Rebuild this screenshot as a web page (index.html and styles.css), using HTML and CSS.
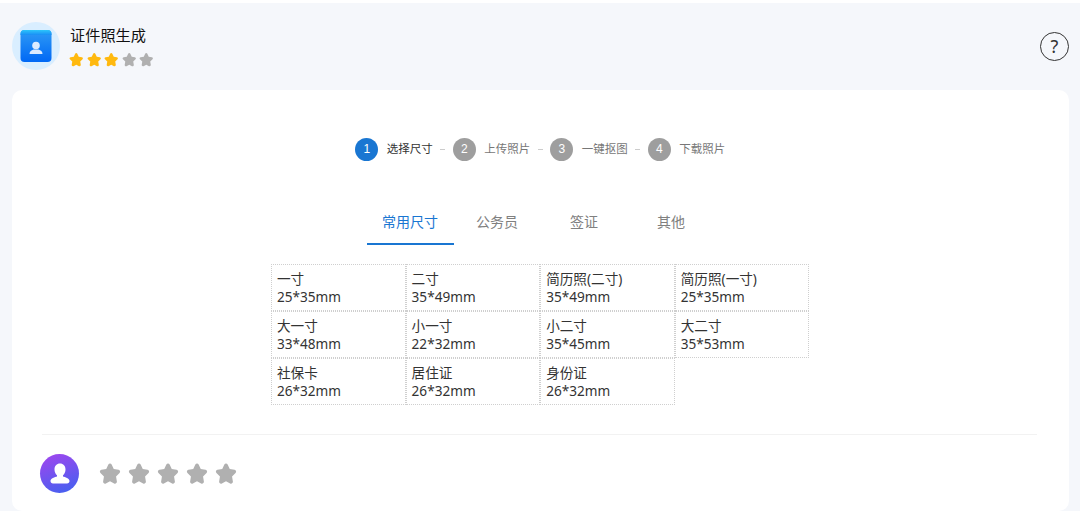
FILE: index.html
```html
<!DOCTYPE html>
<html lang="zh-CN">
<head>
<meta charset="utf-8">
<title>证件照生成</title>
<link rel="stylesheet" href="styles.css">
</head>
<body>
<div class="page">
  <header class="head">
    <div class="logo">
      <svg width="32" height="32" viewBox="0 0 32 32">
        <defs>
          <linearGradient id="lg" x1="0" y1="0" x2="0" y2="1"><stop offset="0" stop-color="#2f9bf5"/><stop offset="1" stop-color="#0068f5"/></linearGradient>
          <linearGradient id="lt" x1="0" y1="0" x2="0" y2="1"><stop offset="0" stop-color="#2cc6fb"/><stop offset="1" stop-color="#1a8ef5"/></linearGradient>
        </defs>
        <rect x="0.500" y="0" width="31" height="32" rx="4" fill="url(#lg)"/>
        <path d="M.5 5V4a4 4 0 0 1 4-4h23a4 4 0 0 1 4 4v1z" fill="url(#lt)"/>
        <circle cx="16" cy="15.500" r="3.800" fill="#dcebff"/>
        <path d="M9.500 24c0-2.600 1.800-3.700 4-4.500h5c2.200.8 4 1.900 4 4.500z" fill="#dcebff"/>
      </svg>
    </div>
    <div class="meta">
      <div class="title">证件照生成</div>
      <div class="stars small">
        <svg class="star on" viewBox="0 0 24 24"><use href="#s"/></svg>
        <svg class="star on" viewBox="0 0 24 24"><use href="#s"/></svg>
        <svg class="star on" viewBox="0 0 24 24"><use href="#s"/></svg>
        <svg class="star" viewBox="0 0 24 24"><use href="#s"/></svg>
        <svg class="star" viewBox="0 0 24 24"><use href="#s"/></svg>
      </div>
    </div>
    <div class="help">?</div>
  </header>

  <main class="card">
    <div class="steps">
      <div class="step active"><span class="num">1</span><span class="lbl">选择尺寸</span></div><i class="dash"></i>
      <div class="step"><span class="num">2</span><span class="lbl">上传照片</span></div><i class="dash"></i>
      <div class="step"><span class="num">3</span><span class="lbl">一键抠图</span></div><i class="dash"></i>
      <div class="step"><span class="num">4</span><span class="lbl">下载照片</span></div>
    </div>

    <nav class="tabs">
      <div class="tab active">常用尺寸</div>
      <div class="tab">公务员</div>
      <div class="tab">签证</div>
      <div class="tab">其他</div>
    </nav>

    <div class="grid">
      <div class="cell">一寸<br>25*35mm</div>
      <div class="cell">二寸<br>35*49mm</div>
      <div class="cell">简历照(二寸)<br>35*49mm</div>
      <div class="cell">简历照(一寸)<br>25*35mm</div>
      <div class="cell">大一寸<br>33*48mm</div>
      <div class="cell">小一寸<br>22*32mm</div>
      <div class="cell">小二寸<br>35*45mm</div>
      <div class="cell">大二寸<br>35*53mm</div>
      <div class="cell">社保卡<br>26*32mm</div>
      <div class="cell">居住证<br>26*32mm</div>
      <div class="cell">身份证<br>26*32mm</div>
    </div>

    <div class="rate">
      <div class="avatar">
        <svg width="24" height="24" viewBox="0 0 24 24"><path d="M12 1.500c3.300 0 5.500 2.500 5.500 6 0 2.500-1 4.500-2.500 5.700v1.300c2 .8 6.500 1.500 6.500 4.500 0 1.600-1 2.500-2.500 2.500H5c-1.500 0-2.500-.9-2.500-2.500 0-3 4.500-3.700 6.500-4.500v-1.300C7.500 12 6.500 10 6.500 7.500c0-3.500 2.200-6 5.500-6z" fill="#fff"/></svg>
      </div>
      <div class="stars big">
        <svg class="star" viewBox="0 0 24 24"><use href="#s"/></svg>
        <svg class="star" viewBox="0 0 24 24"><use href="#s"/></svg>
        <svg class="star" viewBox="0 0 24 24"><use href="#s"/></svg>
        <svg class="star" viewBox="0 0 24 24"><use href="#s"/></svg>
        <svg class="star" viewBox="0 0 24 24"><use href="#s"/></svg>
      </div>
    </div>
  </main>
</div>
<svg class="defs" width="0" height="0"><defs>
  <path id="s" d="M12 1.500c.8 0 1.400.5 1.800 1.300l2.300 4.900 5.200.8c1.700.3 2.300 2.200 1.100 3.400l-3.800 3.900.9 5.500c.3 1.700-1.500 3-3 2.200L12 20.900l-4.500 2.600c-1.500.8-3.300-.5-3-2.200l.9-5.500-3.800-3.900C.4 10.700 1 8.800 2.700 8.500l5.200-.8 2.300-4.900c.4-.8 1-1.300 1.800-1.300z"/>
</defs></svg>
</body>
</html>
```

FILE: styles.css
```css
* { box-sizing: border-box; }
html, body { margin: 0; height: 100%; background: #fff; overflow: hidden; }
body { font-family: "Noto Sans", "Noto Sans CJK SC", sans-serif; color: #333; }
.page { height: 508px; margin-top: 3px; background: #f5f7fb; padding: 0 11px 0 12px; display: flex; flex-direction: column; }
.defs { position: absolute; }

.head { height: 87px; display: flex; align-items: flex-start; padding-top: 19px; }
.logo { width: 48px; height: 48px; border-radius: 50%; background: #d9eeff; display: flex; align-items: center; justify-content: center; }
.meta { margin-left: 10px; flex: 1; }
.title { font-size: 15.200px; line-height: 20px; margin-top: 3px; color: #111; }
.stars { display: flex; }
.star { fill: #b0b0b0; display: block; }
.star.on { fill: #ffb90f; }
.small { gap: 3px; margin-top: 7px; margin-left: -1px; }
.small .star { width: 14.500px; height: 14.500px; }
.help { width: 29px; height: 29px; margin-top: 10px; border: 1.500px solid #333; border-radius: 50%; font-size: 18px; line-height: 26px; text-align: center; color: #333; }

.card { flex: 1; background: #fff; border-radius: 10px; padding: 47px 32px 0 30px; }

.steps { display: flex; align-items: center; justify-content: center; height: 24px; padding-left: 1.500px; }
.step { display: flex; align-items: center; }
.num { width: 23px; height: 23px; border-radius: 50%; background: #9e9e9e; color: #fff; font-family: "Liberation Sans", sans-serif; font-size: 12px; line-height: 23px; text-align: center; }
.lbl { margin-left: 8.500px; font-size: 11.500px; color: #777; line-height: 24px; white-space: nowrap; }
.step.active .num { background: #1976d2; }
.step.active .lbl { color: #333; }
.dash { width: 5px; height: 1px; background: #ccc; margin: 0 7.500px; }

.tabs { display: flex; justify-content: center; margin-top: 38px; height: 46px; padding-left: 2px; }
.tab { width: 87px; height: 46px; text-align: center; font-size: 14px; line-height: 45px; color: #808080; }
.tab.active { color: #1976d2; border-bottom: 2px solid #1976d2; }

.grid { display: grid; grid-template-columns: repeat(4, 134.600px); grid-auto-rows: 47px; margin: 19px 0 0 229px; }
.cell { border: 1px dotted #cfcfcf; padding: 5px 5px 0; font-size: 13.600px; line-height: 18px; color: #333; }

.rate { margin-top: 29px; border-top: 1px solid #f2f2f2; display: flex; align-items: center; padding-top: 19px; }
.avatar { width: 39px; height: 39px; margin-left: -2px; border-radius: 50%; background: linear-gradient(160deg, #a445ee, #3e62f0); display: flex; align-items: center; justify-content: center; }
.big { gap: 7px; margin: -2px 0 0 20px; }
.big .star { width: 22px; height: 22px; }
```
